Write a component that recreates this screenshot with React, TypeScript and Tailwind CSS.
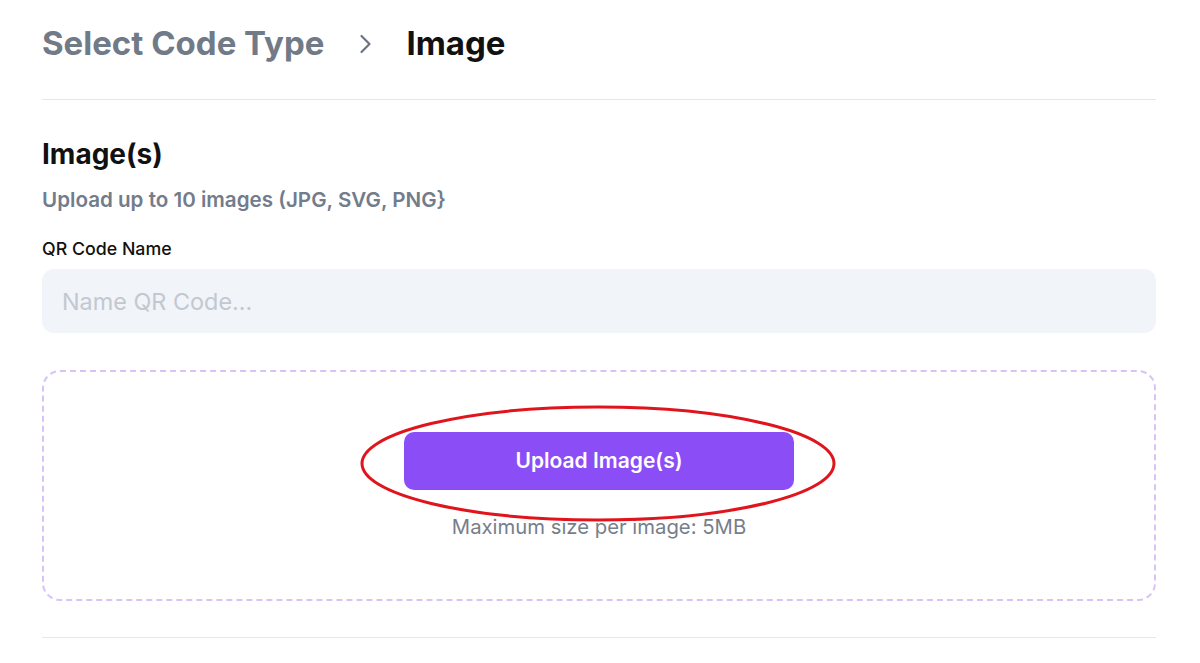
export default function App() {
  return (
    <div className="min-h-screen bg-white pl-[42px] pr-[44px] font-['Inter','Liberation_Sans',sans-serif]">
      {/* Breadcrumb header */}
      <div className="flex h-[100px] items-center border-b border-[#e5e7eb] pb-[12px]">
        <h1 className="text-[33px] font-bold text-[#717a87]">Select Code Type</h1>
        <svg className="ml-[34px] mr-[33px] h-[22px] w-[15px] text-[#6b7280]" viewBox="0 0 15 22" fill="none" stroke="currentColor" strokeWidth="2.2" strokeLinecap="round" strokeLinejoin="round">
          <path d="M3.5 3l8 8-8 8" />
        </svg>
        <h1 className="text-[33px] font-bold text-[#111111]">Image</h1>
      </div>

      <div className="pt-[38px]">
        <h2 className="text-[28px] font-bold leading-[32px] text-[#111111]">Image(s)</h2>
        <p className="mt-[16px] text-[20.6px] font-semibold leading-[28px] text-[#737c8b]">{'Upload up to 10 images (JPG, SVG, PNG}'}</p>

        <label className="mt-[23px] block text-[17.8px] font-medium leading-[24px] text-[#111111]">QR Code Name</label>
        <input
          type="text"
          placeholder="Name QR Code..."
          className="mt-[8px] h-[64px] w-full rounded-[12px] bg-[#f1f4f8] px-[20px] text-[23.4px] text-[#111] outline-none placeholder:text-[#c3c8d0]"
        />

        {/* Upload drop zone */}
        <div className="relative mt-[37px] flex h-[231px] flex-col items-center rounded-[18px] border-2 border-dashed border-[#d6c4f7] pt-[60px]">
          <button className="h-[58px] w-[390px] rounded-[10px] bg-[#8b4df6] text-[21px] font-semibold text-white">
            Upload Image(s)
          </button>
          <p className="mt-[23px] text-[20.3px] leading-[28px] text-[#767e8b]">Maximum size per image: 5MB</p>

          {/* Annotation ring */}
          <svg className="pointer-events-none absolute left-[316px] top-[33px] h-[117px] w-[476px]" viewBox="0 0 476 117" fill="none">
            <ellipse cx="238" cy="58.5" rx="236" ry="56.5" stroke="#e0141c" strokeWidth="3" />
          </svg>
        </div>

        <div className="mt-[36px] border-b border-[#e5e7eb]" />
      </div>
    </div>
  );
}
